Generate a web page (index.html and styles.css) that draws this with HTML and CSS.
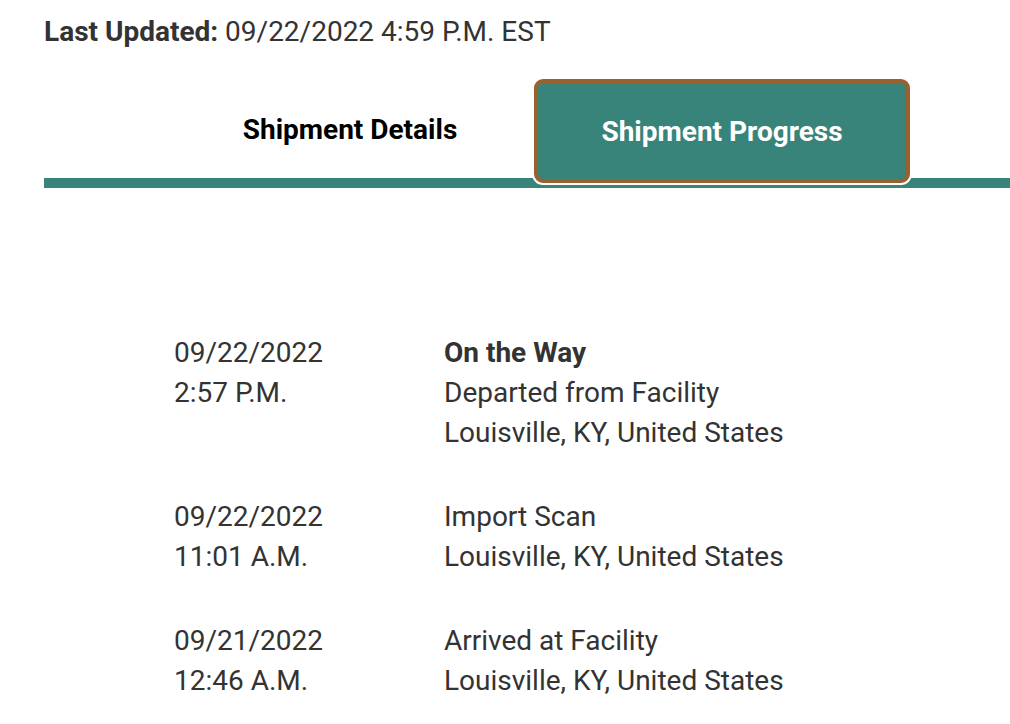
FILE: index.html
```html
<!DOCTYPE html>
<html lang="en">
<head>
<meta charset="utf-8">
<title>Shipment Progress</title>
<link rel="stylesheet" href="styles.css">
</head>
<body>
<div class="page">
  <p class="updated"><strong>Last Updated:</strong> 09/22/2022 4:59 P.M. EST</p>
  <div class="tabs">
    <div class="tab">Shipment Details</div>
    <div class="tab tab-active">Shipment Progress</div>
  </div>
  <ul class="timeline">
    <li class="event">
      <div class="when"><div>09/22/2022</div><div>2:57 P.M.</div></div>
      <div class="what"><div class="status">On the Way</div><div>Departed from Facility</div><div>Louisville, KY, United States</div></div>
    </li>
    <li class="event">
      <div class="when"><div>09/22/2022</div><div>11:01 A.M.</div></div>
      <div class="what"><div>Import Scan</div><div>Louisville, KY, United States</div></div>
    </li>
    <li class="event">
      <div class="when"><div>09/21/2022</div><div>12:46 A.M.</div></div>
      <div class="what"><div>Arrived at Facility</div><div>Louisville, KY, United States</div></div>
    </li>
  </ul>
</div>
</body>
</html>
```
FILE: styles.css
```css
html, body {
  margin: 0;
  padding: 0;
  background: #ffffff;
}
body {
  font-family: Roboto, "Liberation Sans", Arial, sans-serif;
  color: #333333;
  overflow: hidden;
}
.page {
  padding-left: 44px;
}
.updated {
  margin: 16px 0 0 0;
  font-size: 28px;
  line-height: 32px;
  color: #333333;
}
.updated strong {
  font-weight: 700;
}
.tabs {
  margin-top: 31px;
  height: 99px;
  display: flex;
  align-items: flex-end;
  padding-left: 122px;
  border-bottom: 10px solid #38847b;
}
.tab {
  box-sizing: border-box;
  width: 368px;
  height: 99px;
  padding-top: 2px;
  display: flex;
  align-items: center;
  justify-content: center;
  font-size: 28px;
  font-weight: 700;
  color: #000000;
}
.tab-active {
  width: 376px;
  height: 104px;
  padding-top: 0;
  margin-bottom: -5px;
  position: relative;
  z-index: 1;
  background: #38847b;
  border: 4px solid #98622f;
  border-radius: 9px;
  box-shadow: 0 0 0 2px #ffffff;
  color: #ffffff;
}
.timeline {
  list-style: none;
  margin: 145px 0 0 0;
  padding: 0 0 0 130px;
  display: flex;
  flex-direction: column;
  gap: 44px;
}
.event {
  display: grid;
  grid-template-columns: 270px 1fr;
  font-size: 28px;
  line-height: 40px;
}
.status {
  font-weight: 700;
}
```
